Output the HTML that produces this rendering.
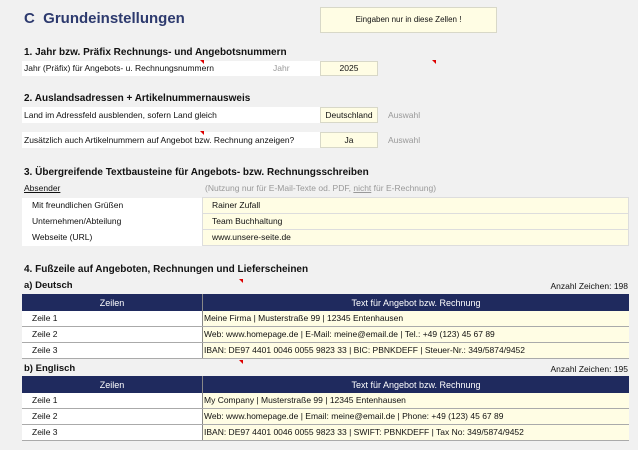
<!DOCTYPE html>
<html><head><meta charset="utf-8"><style>
body{margin:0;width:638px;height:450px;background:#f1f1f1;font-family:"Liberation Sans",Arial,sans-serif;position:relative;overflow:hidden;color:#111}
.a{position:absolute;white-space:nowrap}
.t{font-size:8.5px}
.h{font-size:10px;font-weight:bold}
.y{background:#fffde4;border:1px solid #d8d8c8;box-sizing:border-box;text-align:center;font-size:8.5px}
.g{color:#999;font-size:8.5px}
.red{position:absolute;width:0;height:0;border-top:4px solid #d00;border-left:4px solid transparent}
table{position:absolute;left:22px;width:607px;border-collapse:collapse;font-size:8.5px}
td{height:15px;padding:0;border-bottom:1px solid #aaa;line-height:15px}
td.l{width:170px;padding-left:10px;background:#fff}
td.v{background:#fffde4;border-left:1px solid #888;padding-left:1px}
th{background:#1f2a5e;color:#fff;font-weight:normal;height:17px;padding:0;font-size:9px}
th+th{border-left:1px solid #888}
</style></head><body>
<div class="a" style="left:24px;top:10px;font-size:15px;font-weight:bold;color:#2d3a6e">C&nbsp; Grundeinstellungen</div>
<div class="a y" style="left:320px;top:7px;width:177px;height:26px;line-height:24px;font-size:8px">Eingaben nur in diese Zellen !</div>

<div class="a h" style="left:24px;top:47px">1. Jahr bzw. Präfix Rechnungs- und Angebotsnummern</div>
<div class="a" style="left:22px;top:61px;width:298px;height:15px;background:#fff"></div>
<div class="a t" style="left:24px;top:63px">Jahr (Präfix) für Angebots- u. Rechnungsnummern</div>
<div class="a g" style="left:273px;top:63px">Jahr</div>
<div class="a y" style="left:320px;top:61px;width:58px;height:15px;line-height:13px">2025</div>
<div class="red" style="left:200px;top:60px"></div>
<div class="red" style="left:432px;top:60px"></div>

<div class="a h" style="left:24px;top:93px">2. Auslandsadressen + Artikelnummernausweis</div>
<div class="a" style="left:22px;top:107px;width:298px;height:16px;background:#fff"></div>
<div class="a t" style="left:24px;top:110px">Land im Adressfeld ausblenden, sofern Land gleich</div>
<div class="a y" style="left:320px;top:107px;width:58px;height:16px;line-height:14px">Deutschland</div>
<div class="a g" style="left:388px;top:110px">Auswahl</div>
<div class="a" style="left:22px;top:132px;width:298px;height:16px;background:#fff"></div>
<div class="a t" style="left:24px;top:135px">Zusätzlich auch Artikelnummern auf Angebot bzw. Rechnung anzeigen?</div>
<div class="a y" style="left:320px;top:132px;width:58px;height:16px;line-height:14px">Ja</div>
<div class="a g" style="left:388px;top:135px">Auswahl</div>
<div class="red" style="left:200px;top:131px"></div>

<div class="a h" style="left:24px;top:167px">3. Übergreifende Textbausteine für Angebots- bzw. Rechnungsschreiben</div>
<div class="a t" style="left:24px;top:183px;text-decoration:underline">Absender</div>
<div class="a g" style="left:205px;top:183px">(Nutzung nur für E-Mail-Texte od. PDF, <u>nicht</u> für E-Rechnung)</div>
<table style="top:197px;font-size:8.5px"><tr><td class="l" style="border-bottom:none">Mit freundlichen Grüßen</td><td class="v" style="padding-left:9px;border:1px solid #ddd">Rainer Zufall</td></tr>
<tr><td class="l" style="border-bottom:none">Unternehmen/Abteilung</td><td class="v" style="padding-left:9px;border:1px solid #ddd">Team Buchhaltung</td></tr>
<tr><td class="l" style="border-bottom:none">Webseite (URL)</td><td class="v" style="padding-left:9px;border:1px solid #ddd">www.unsere-seite.de</td></tr></table>

<div class="a h" style="left:24px;top:264px">4. Fußzeile auf Angeboten, Rechnungen und Lieferscheinen</div>
<div class="a h" style="left:24px;top:280px;font-size:9.5px">a) Deutsch</div>
<div class="a t" style="right:10px;top:281px">Anzahl Zeichen: 198</div>
<div class="red" style="left:239px;top:279px"></div>
<table style="top:294px"><tr><th>Zeilen</th><th>Text für Angebot bzw. Rechnung</th></tr>
<tr><td class="l">Zeile 1</td><td class="v">Meine Firma | Musterstraße 99 | 12345 Entenhausen</td></tr>
<tr><td class="l">Zeile 2</td><td class="v">Web: www.homepage.de | E-Mail: meine@email.de | Tel.: +49 (123) 45 67 89</td></tr>
<tr><td class="l">Zeile 3</td><td class="v">IBAN: DE97 4401 0046 0055 9823 33 | BIC: PBNKDEFF | Steuer-Nr.: 349/5874/9452</td></tr></table>
<div class="a h" style="left:24px;top:363px;font-size:9.5px">b) Englisch</div>
<div class="a t" style="right:10px;top:364px">Anzahl Zeichen: 195</div>
<div class="red" style="left:239px;top:360px"></div>
<table style="top:376px"><tr><th>Zeilen</th><th>Text für Angebot bzw. Rechnung</th></tr>
<tr><td class="l">Zeile 1</td><td class="v">My Company | Musterstraße 99 | 12345 Entenhausen</td></tr>
<tr><td class="l">Zeile 2</td><td class="v">Web: www.homepage.de | Email: meine@email.de | Phone: +49 (123) 45 67 89</td></tr>
<tr><td class="l">Zeile 3</td><td class="v">IBAN: DE97 4401 0046 0055 9823 33 | SWIFT: PBNKDEFF | Tax No: 349/5874/9452</td></tr></table>
</body></html>
